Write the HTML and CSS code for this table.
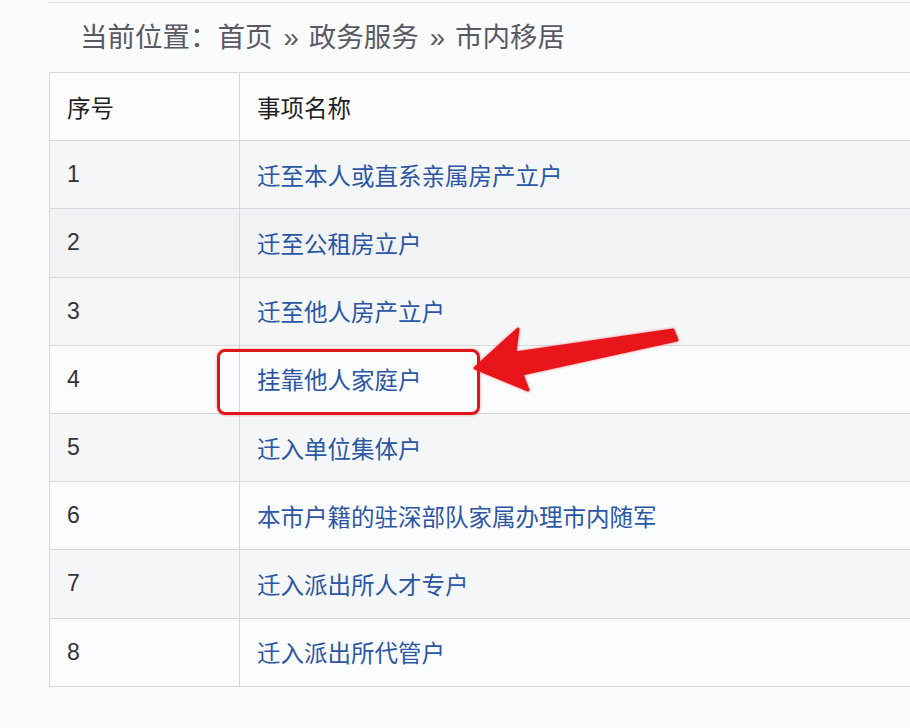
FILE: index.html
```html
<!DOCTYPE html>
<html lang="zh-CN">
<head>
<meta charset="utf-8">
<title>市内移居</title>
<link rel="stylesheet" href="styles.css">
</head>
<body>
<div class="page">
  <div class="topline"></div>
  <div class="crumb">当前位置：首页<span class="sep">»</span>政务服务<span class="sep">»</span>市内移居</div>
  <table class="items">
    <colgroup><col class="c-no"><col class="c-name"></colgroup>
    <thead>
      <tr class="head"><th>序号</th><th>事项名称</th></tr>
    </thead>
    <tbody>
      <tr class="gray"><td>1</td><td><a href="#">迁至本人或直系亲属房产立户</a></td></tr>
      <tr class="gray2"><td>2</td><td><a href="#">迁至公租房立户</a></td></tr>
      <tr class="gray"><td>3</td><td><a href="#">迁至他人房产立户</a></td></tr>
      <tr class="white"><td>4</td><td><a href="#">挂靠他人家庭户</a></td></tr>
      <tr class="gray"><td>5</td><td><a href="#">迁入单位集体户</a></td></tr>
      <tr class="white"><td>6</td><td><a href="#">本市户籍的驻深部队家属办理市内随军</a></td></tr>
      <tr class="gray"><td>7</td><td><a href="#">迁入派出所人才专户</a></td></tr>
      <tr class="white"><td>8</td><td><a href="#">迁入派出所代管户</a></td></tr>
    </tbody>
  </table>
  <div class="highlight"></div>
  <svg class="arrow" width="910" height="728" viewBox="0 0 910 728" aria-hidden="true">
    <path d="M475 368 L518 329 L515 353 L673 330 L677 340 L522 374 L528 390 Z" fill="#e8151b" stroke="#e8151b" stroke-width="3" stroke-linejoin="round"/>
  </svg>
</div>
</body>
</html>
```

FILE: styles.css
```css
html, body {
  margin: 0;
  padding: 0;
  background: #fafbfd;
}
.page {
  position: relative;
  width: 910px;
  height: 728px;
  overflow: hidden;
  font-family: "Liberation Sans", "Noto Sans CJK SC", sans-serif;
}
.topline {
  margin: 2px 0 0 48px;
  height: 0;
  border-top: 1px solid #dcdfe4;
}
.crumb {
  height: 69px;
  line-height: 69px;
  padding-left: 80px;
  font-size: 27.5px;
  color: #5a5864;
  white-space: nowrap;
}
.sep {
  margin: 0 10px 0 11px;
}
.items {
  margin-left: 49px;
  width: 862px;
  border-collapse: collapse;
  table-layout: fixed;
  border-left: 1px solid #d5d8dd;
}
.c-no { width: 190px; }
.items th,
.items td {
  height: 67.2px;
  padding: 0 0 0 17px;
  border: 1px solid #d5d8dd;
  text-align: left;
  vertical-align: middle;
  font-size: 23.5px;
  font-weight: normal;
  white-space: nowrap;
}
.items th {
  color: #1f1f26;
}
.items td:first-child {
  color: #35303c;
  font-size: 23px;
}
.head { background: #fdfdfe; }
.gray { background: #f5f6f8; }
.gray2 { background: #f1f2f4; }
.white { background: #fbfcfe; }
.items a {
  color: #2b56a6;
  text-decoration: none;
}
.highlight {
  position: absolute;
  left: 217px;
  top: 349px;
  width: 257px;
  height: 60px;
  border: 3px solid #e0161c;
  border-radius: 8px;
  box-shadow: 0 0 3px rgba(230, 20, 20, 0.45);
}
.arrow {
  position: absolute;
  left: 0;
  top: 0;
  pointer-events: none;
  filter: drop-shadow(0 0 1.5px rgba(230, 20, 20, 0.5));
}
```
